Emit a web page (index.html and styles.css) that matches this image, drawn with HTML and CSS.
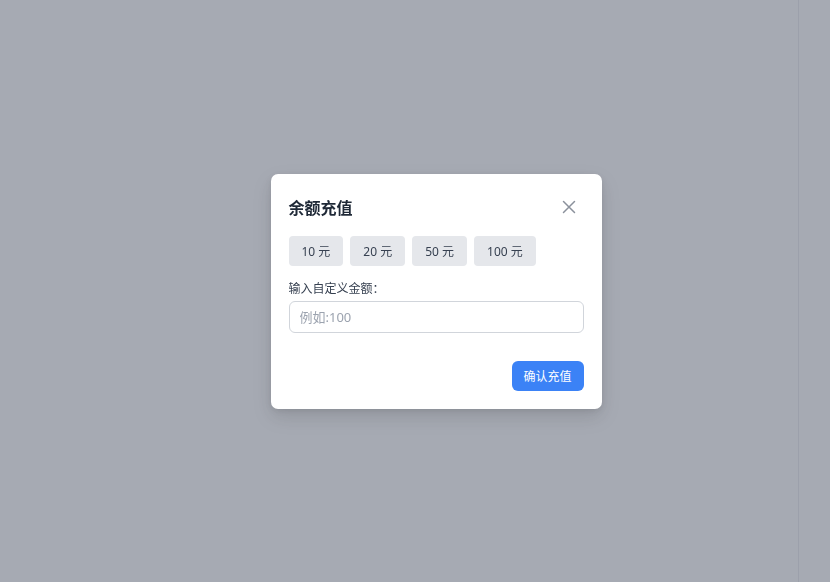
FILE: index.html
```html
<!DOCTYPE html>
<html lang="zh-CN">
<head>
    <meta charset="UTF-8">
    <title>余额充值</title>
    <link rel="stylesheet" href="styles.css">
</head>
<body>
<div class="page">
    <div class="main"></div>
    <div class="side"></div>
</div>

<!-- Recharge modal -->
<div class="overlay">
    <div class="modal">
        <div class="modal-head">
            <h3>余额充值</h3>
            <button class="close" aria-label="关闭">
                <svg width="14" height="14" viewBox="0 0 14 14">
                    <path d="M1.5 1.5 L12.5 12.5 M12.5 1.5 L1.5 12.5" stroke="#8b919c" stroke-width="1.5" stroke-linecap="round"/>
                </svg>
            </button>
        </div>
        <div class="amounts">
            <button class="amount">10 元</button>
            <button class="amount">20 元</button>
            <button class="amount">50 元</button>
            <button class="amount">100 元</button>
        </div>
        <label class="label" for="customAmount">输入自定义金额：</label>
        <input type="text" id="customAmount" class="field" placeholder="例如:100" autocomplete="off">
        <div class="foot">
            <button class="confirm">确认充值</button>
        </div>
    </div>
</div>
</body>
</html>
```

FILE: styles.css
```css
* {box-sizing: border-box;}
html, body {margin: 0; height: 100%;}
body {font-family: "Noto Sans", "Noto Sans CJK SC", sans-serif; background: #fff; color: #1f2937;}
.page {display: flex; height: 100%;}
.main {flex: 1;}
.side {width: 32px; border-left: 1px solid #e5e7eb;}
.overlay {position: fixed; inset: 0; background: rgba(107, 114, 128, 0.6); display: flex; align-items: center; justify-content: center; padding: 0 0 0 42px;}
.modal {width: 331px; background: #fff; border-radius: 7px; padding: 18px; box-shadow: 0 8px 20px rgba(0, 0, 0, 0.12), 0 2px 6px rgba(0, 0, 0, 0.08);}
.modal-head {display: flex; justify-content: space-between; align-items: center; height: 30px;}
.modal-head h3 {margin: 0; font-size: 16px; font-weight: 700; color: #1f2937; font-family: "Noto Sans CJK SC", sans-serif;}
.close {border: 0; background: none; padding: 0; width: 18px; height: 18px; margin-right: 6px; display: flex; align-items: center; justify-content: center; cursor: pointer;}
.amounts {display: flex; gap: 7px; margin-top: 14px;}
.amount {height: 30px; padding: 0 13px; border: 0; border-radius: 4px; background: #e5e7eb; color: #374151; font-family: inherit; font-size: 12px; cursor: pointer;}
.label {display: block; margin-top: 14px; font-size: 12px; line-height: 18px; color: #374151;}
.field {display: block; width: 100%; height: 32px; margin-top: 3px; padding: 0 10px; border: 1px solid #d1d5db; border-radius: 6px; font-family: inherit; font-size: 13px; color: #374151; outline: none;}
.field::placeholder {color: #9ca3af;}
.foot {display: flex; justify-content: flex-end; margin-top: 28px;}
.confirm {height: 30px; width: 72px; border: 0; border-radius: 6px; background: #3b82f6; color: #fff; font-family: inherit; font-size: 12px; cursor: pointer;}
```
